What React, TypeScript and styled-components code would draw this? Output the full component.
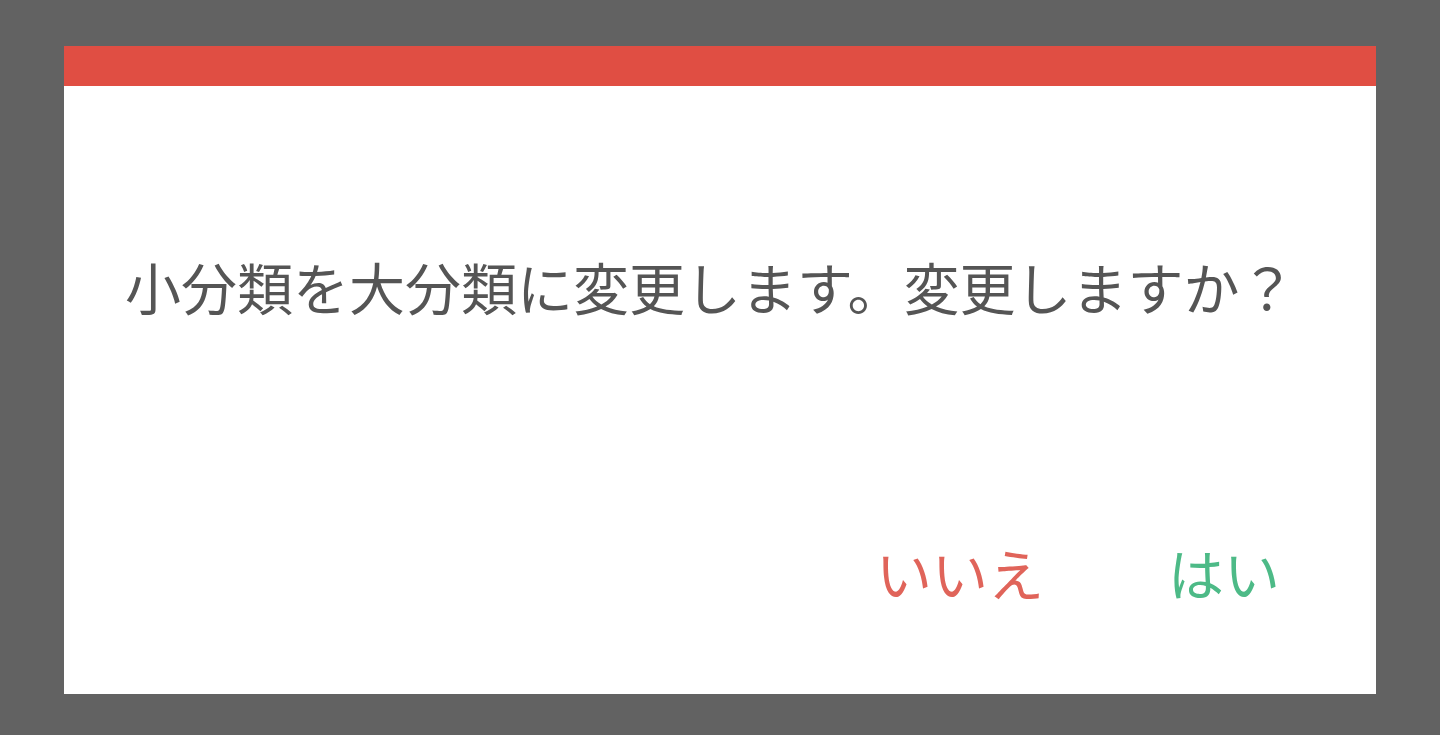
import styled, { createGlobalStyle } from "styled-components";

const GlobalStyle = createGlobalStyle`
  html, body {
    margin: 0;
    padding: 0;
    background: #626262;
  }
  body {
    font-family: "Noto Sans CJK JP", "Noto Sans", sans-serif;
  }
`;

const Overlay = styled.div`
  width: 1440px;
  height: 735px;
  padding: 46px 64px 41px;
  box-sizing: border-box;
  background: #626262;
`;

const Dialog = styled.div`
  height: 100%;
  background: #fff;
  display: flex;
  flex-direction: column;
`;

const Header = styled.div`
  height: 40px;
  flex: none;
  background: #e04e43;
`;

const Body = styled.div`
  flex: 1;
  display: flex;
  flex-direction: column;
  padding: 0 96px 0 61px;
`;

const Message = styled.p`
  margin: 0;
  padding-top: 164px;
  font-size: 56px;
  line-height: 72px;
  color: #555;
  white-space: nowrap;
`;

const Actions = styled.div`
  margin-top: auto;
  margin-bottom: 90px;
  display: flex;
  justify-content: flex-end;
  gap: 124px;
`;

const ActionButton = styled.button<{ $tone: "no" | "yes" }>`
  border: none;
  background: none;
  padding: 0;
  font-family: inherit;
  font-size: 56px;
  line-height: 64px;
  cursor: pointer;
  color: ${(p) => (p.$tone === "no" ? "#e0645a" : "#4dba87")};
`;

export default function App() {
  return (
    <>
      <GlobalStyle />
      <Overlay>
        <Dialog>
          <Header />
          <Body>
            <Message>小分類を大分類に変更します。変更しますか？</Message>
            <Actions>
              <ActionButton $tone="no">いいえ</ActionButton>
              <ActionButton $tone="yes">はい</ActionButton>
            </Actions>
          </Body>
        </Dialog>
      </Overlay>
    </>
  );
}
